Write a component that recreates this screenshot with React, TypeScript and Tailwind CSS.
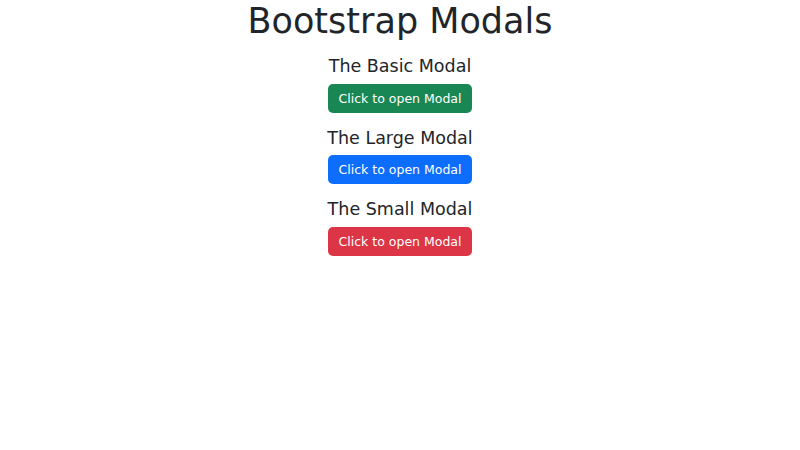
import React from "react";

const sections = [
  { title: "The Basic Modal", cls: "bg-[#198754]" },
  { title: "The Large Modal", cls: "bg-[#0d6efd]" },
  { title: "The Small Modal", cls: "bg-[#dc3545]" },
];

export default function App() {
  return (
    <div
      className="min-h-[450px] w-full bg-white text-center text-[#212529]"
      style={{ fontFamily: '"DejaVu Sans", sans-serif' }}
    >
      <h1 className="m-0 mb-[14px] text-[35px] font-normal leading-[42px]">Bootstrap Modals</h1>
      {sections.map((s) => (
        <div key={s.title} className="mb-[15px] flex flex-col items-center">
          <h4 className="m-0 mb-[6.5px] text-[17.5px] font-normal leading-[21px]">{s.title}</h4>
          <button
            className={`${s.cls} h-[29px] w-[144px] rounded-[5px] border border-transparent text-[12.5px] leading-[19px] text-white`}
          >
            Click to open Modal
          </button>
        </div>
      ))}
    </div>
  );
}
